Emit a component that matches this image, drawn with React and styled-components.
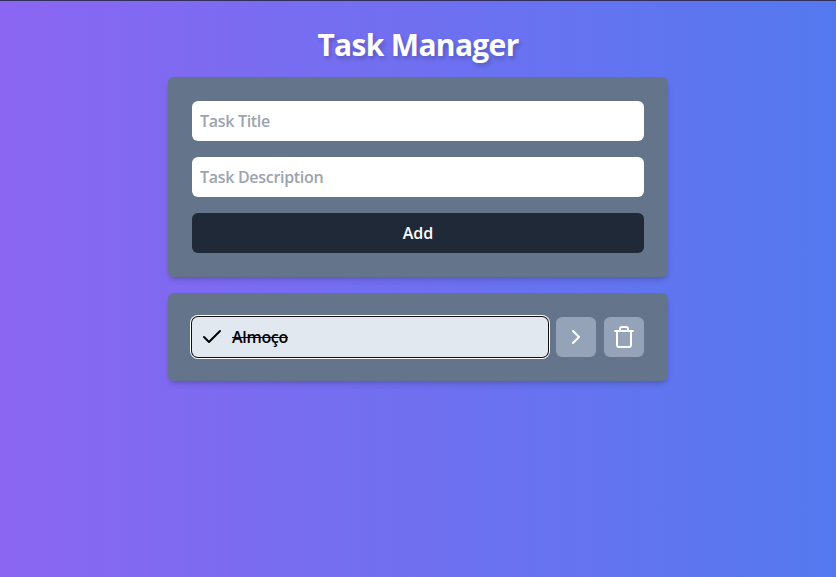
import React from "react";
import styled, { createGlobalStyle } from "styled-components";
import { Check, ChevronRight, Trash } from "lucide-react";

const GlobalStyle = createGlobalStyle`
  *, *::before, *::after { box-sizing: border-box; }
  body {
    margin: 0;
    font-family: "Open Sans", "Noto Sans", sans-serif;
    font-size: 16px;
    line-height: 24px;
    color: #000;
  }
  button, input { font: inherit; color: inherit; border: 0; margin: 0; }
`;

const Page = styled.div`
  height: 577px;
  display: flex;
  justify-content: center;
  padding-top: 24px;
  border-top: 1px solid #33305a;
  background: linear-gradient(to right, #8b66f2, #5479ef);
`;

const Content = styled.main`
  width: 500px;
  display: flex;
  flex-direction: column;
  gap: 16px;
`;

const Title = styled.h1`
  margin: 0 0 -4px;
  height: 40px;
  line-height: 40px;
  text-align: center;
  font-size: 30px;
  font-weight: 700;
  letter-spacing: -0.68px;
  color: #fff;
  text-shadow: 2px 3px 4px rgba(0, 0, 0, 0.2);
`;

const Panel = styled.section`
  padding: 24px;
  border-radius: 6px;
  background: #64748b;
  box-shadow: 0 4px 6px -1px rgba(0, 0, 0, 0.15), 0 2px 4px -2px rgba(0, 0, 0, 0.15);
`;

const Form = styled.form`
  display: flex;
  flex-direction: column;
  gap: 16px;
`;

const Field = styled.input`
  height: 40px;
  padding: 0 8px;
  border-radius: 6px;
  background: #fff;
  font-weight: 600;
  letter-spacing: -0.3px;
  outline: 0;
  &::placeholder { color: #9ca3af; opacity: 1; }
`;

const AddButton = styled.button`
  height: 40px;
  border-radius: 6px;
  background: #1f2937;
  color: #fff;
  font-weight: 600;
`;

const TaskRow = styled.div`
  display: flex;
  gap: 8px;
`;

const TaskButton = styled.button`
  flex: 1;
  height: 40px;
  display: flex;
  align-items: center;
  gap: 8px;
  padding: 0 8px;
  border-radius: 6px;
  background: #e2e8f0;
  font-weight: 600;
  letter-spacing: -0.3px;
  text-decoration: ${({ $done }) => ($done ? "line-through" : "none")};
  box-shadow: 0 0 0 1px #101010, 0 0 0 2px #fff;
`;

const IconButton = styled.button`
  width: 40px;
  height: 40px;
  display: grid;
  place-items: center;
  padding: 0;
  border-radius: 6px;
  background: #94a3b8;
  color: #fff;
`;

export default function App() {
  return (
    <>
      <GlobalStyle />
      <Page>
        <Content>
          <Title>Task Manager</Title>
          <Panel>
            <Form>
              <Field placeholder="Task Title" />
              <Field placeholder="Task Description" />
              <AddButton type="button">Add</AddButton>
            </Form>
          </Panel>
          <Panel>
            <TaskRow>
              <TaskButton $done><Check size={24} />Almoço</TaskButton>
              <IconButton aria-label="Details"><ChevronRight size={24} /></IconButton>
              <IconButton aria-label="Delete"><Trash size={24} /></IconButton>
            </TaskRow>
          </Panel>
        </Content>
      </Page>
    </>
  );
}
